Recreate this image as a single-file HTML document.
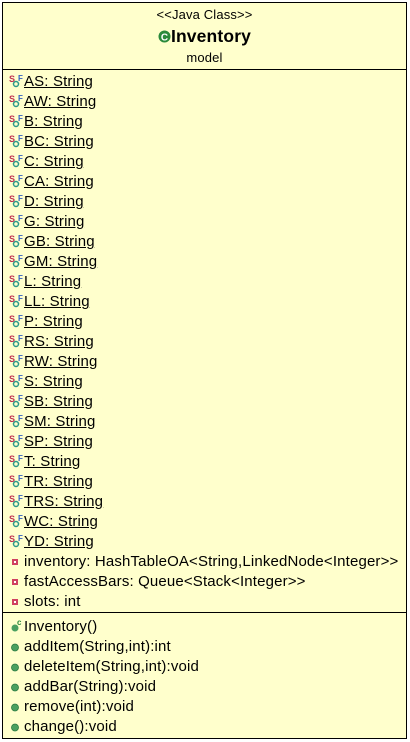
<!DOCTYPE html>
<html><head><style>
body{margin:0;width:410px;height:742px;background:#fff;font-family:"Liberation Sans",sans-serif;font-size:15px;letter-spacing:0.15px;color:#000;overflow:hidden}
.box{position:absolute;left:2px;top:2px;width:403px;height:735px;border:1px solid #000;background:#ffffcc}
.sep{position:absolute;left:0;width:403px;height:1px;background:#000}
.row{position:absolute;left:21px;height:20px;line-height:20px;white-space:nowrap}
.u{text-decoration:underline}
.ic{position:absolute;left:-16px;top:0;width:16px;height:20px}
.c{position:absolute;width:100%;text-align:center}
</style></head><body>
<div class="box">
<div class="c" style="top:4px;font-size:13px">&lt;&lt;Java Class&gt;&gt;</div>
<div class="c" style="top:23px;font-size:17.5px;font-weight:bold"><svg width="13" height="13" style="vertical-align:-1px"><circle cx="6.5" cy="6.5" r="6" fill="#2a8a3a"/><text x="6.5" y="10.5" font-size="10" font-weight="bold" fill="#fff" text-anchor="middle" font-family="Liberation Sans">C</text></svg>Inventory</div>
<div class="c" style="top:47px;font-size:13px">model</div>
<div class="sep" style="top:66px"></div>
<div id="f"></div>
<div class="sep" style="top:609px"></div>
</div>
<script>
var s=["AS","AW","B","BC","C","CA","D","G","GB","GM","L","LL","P","RS","RW","S","SB","SM","SP","T","TR","TRS","WC","YD"];
var h="";
var st='<svg class="ic" viewBox="0 0 16 20"><text x="1" y="10" font-size="9" font-weight="bold" fill="#c03050" font-family="Liberation Sans">S</text><circle cx="8" cy="12" r="2.5" fill="none" stroke="#2a9a8a" stroke-width="1.5"/><text x="10" y="9" font-size="8" font-weight="bold" fill="#3060c0" font-family="Liberation Sans">F</text></svg>';
var pr='<svg class="ic" viewBox="0 0 16 20"><rect x="4" y="7" width="6" height="6" fill="#d04060"/><rect x="6" y="9" width="2" height="2" fill="#fff"/></svg>';
var pu='<svg class="ic" viewBox="0 0 16 20"><circle cx="7" cy="10.5" r="3.5" fill="#4aa060" stroke="#2a7a40" stroke-width="0.8"/></svg>';
var co='<svg class="ic" viewBox="0 0 16 20"><circle cx="7" cy="11" r="3.5" fill="#4aa060"/><text x="9" y="8" font-size="8" font-weight="bold" fill="#2a8a3a" font-family="Liberation Sans">c</text></svg>';
for(var i=0;i<s.length;i++){h+='<div class="row" style="top:'+(69+i*20)+'px">'+st+'<span class="u">'+s[i]+': String</span></div>';}
var p=["inventory: HashTableOA&lt;String,LinkedNode&lt;Integer&gt;&gt;","fastAccessBars: Queue&lt;Stack&lt;Integer&gt;&gt;","slots: int"];
for(var j=0;j<3;j++){h+='<div class="row" style="top:'+(549+j*20)+'px">'+pr+p[j]+'</div>';}
var m=["Inventory()","addItem(String,int):int","deleteItem(String,int):void","addBar(String):void","remove(int):void","change():void"];
for(var k=0;k<6;k++){h+='<div class="row" style="top:'+(614+k*20)+'px">'+(k==0?co:pu)+m[k]+'</div>';}
document.getElementById("f").innerHTML=h;
</script>
</body></html>
